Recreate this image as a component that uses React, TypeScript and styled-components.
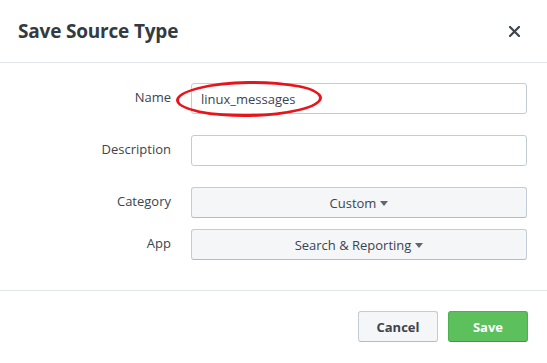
import styled, { createGlobalStyle } from 'styled-components';

const GlobalStyle = createGlobalStyle`
  html, body {
    margin: 0;
    padding: 0;
    background: #ffffff;
  }
  * {
    box-sizing: border-box;
  }
`;

function Caret() {
  return (
    <CaretIcon width="8" height="5" viewBox="0 0 8 5">
      <path d="M0 0 L8 0 L4 5 Z" fill="#5c6773" />
    </CaretIcon>
  );
}

export default function App() {
  return (
    <>
      <GlobalStyle />
      <Modal>
        <Header>
          <Title>Save Source Type</Title>
          <Close aria-label="close">
            <svg width="11" height="11" viewBox="0 0 11 11">
              <path
                d="M1 1 L10 10 M10 1 L1 10"
                stroke="#3c444d"
                strokeWidth="2.2"
                strokeLinecap="square"
              />
            </svg>
          </Close>
        </Header>
        <Body>
          <Row $after={21}>
            <Label>Name</Label>
            <Field>
              <Input defaultValue="linux_messages" />
              <Highlight />
            </Field>
          </Row>
          <Row $after={21}>
            <Label>Description</Label>
            <Field>
              <Input />
            </Field>
          </Row>
          <Row $after={11}>
            <Label>Category</Label>
            <Field>
              <Select>
                Custom <Caret />
              </Select>
            </Field>
          </Row>
          <Row>
            <Label>App</Label>
            <Field>
              <Select>
                Search &amp; Reporting <Caret />
              </Select>
            </Field>
          </Row>
        </Body>
        <Footer>
          <Button>Cancel</Button>
          <Button $primary>Save</Button>
        </Footer>
      </Modal>
    </>
  );
}

const Modal = styled.div`
  width: 547px;
  height: 363px;
  background: #ffffff;
  font-family: 'Open Sans', 'Liberation Sans', sans-serif;
  color: #3c444d;
  display: flex;
  flex-direction: column;
`;

const Header = styled.div`
  height: 63px;
  border-bottom: 1px solid #e1e6eb;
  display: flex;
  align-items: center;
  justify-content: space-between;
  padding: 0 27px 0 18px;
`;

const Title = styled.h1`
  margin: 0;
  font-size: 19px;
  font-weight: 700;
  letter-spacing: -0.01em;
  color: #333a42;
`;

const Close = styled.div`
  display: flex;
  width: 11px;
  height: 11px;
`;

const Body = styled.div`
  display: flex;
  flex-direction: column;
  padding: 20px 20px 30px 0;
  border-bottom: 1px solid #e1e6eb;
`;

const Row = styled.div<{ $after?: number }>`
  display: grid;
  grid-template-columns: 171px 1fr;
  column-gap: 20px;
  margin-bottom: ${(p) => p.$after ?? 0}px;
`;

const Label = styled.div`
  text-align: right;
  font-size: 13px;
  line-height: 18px;
  padding-top: 5px;
  color: #3c444d;
`;

const Field = styled.div`
  position: relative;
  height: 31px;
`;

const Input = styled.input`
  display: block;
  width: 100%;
  height: 31px;
  border: 1px solid #c3cbd4;
  border-radius: 3px;
  padding: 0 9px;
  font-family: inherit;
  font-size: 13px;
  color: #3c444d;
  background: #ffffff;
  outline: none;
`;

const Highlight = styled.div`
  position: absolute;
  left: -15px;
  top: -2px;
  width: 146px;
  height: 36px;
  border: 3px solid #e8141b;
  border-radius: 50%;
  transform: rotate(-1deg);
  pointer-events: none;
`;

const Select = styled.div`
  height: 31px;
  border: 1px solid #c3cbd4;
  border-bottom-color: #b3bcc6;
  border-radius: 3px;
  background: #f5f6f8;
  display: flex;
  align-items: center;
  justify-content: center;
  gap: 4px;
  font-size: 13px;
  color: #3c444d;
`;

const CaretIcon = styled.svg`
  display: block;
  margin-top: 1px;
`;

const Footer = styled.div`
  display: flex;
  justify-content: flex-end;
  gap: 10px;
  padding: 20px 19px 0 0;
`;

const Button = styled.button<{ $primary?: boolean }>`
  width: 80px;
  height: 31px;
  border-radius: 3px;
  font-family: inherit;
  font-size: 13px;
  font-weight: 700;
  cursor: pointer;
  border: 1px solid ${(p) => (p.$primary ? '#4fae4f' : '#c3cbd4')};
  border-bottom-color: ${(p) => (p.$primary ? '#3f9a3f' : '#b3bcc6')};
  background: ${(p) => (p.$primary ? '#5cc05c' : '#f5f6f8')};
  color: ${(p) => (p.$primary ? '#ffffff' : '#3c444d')};
`;
